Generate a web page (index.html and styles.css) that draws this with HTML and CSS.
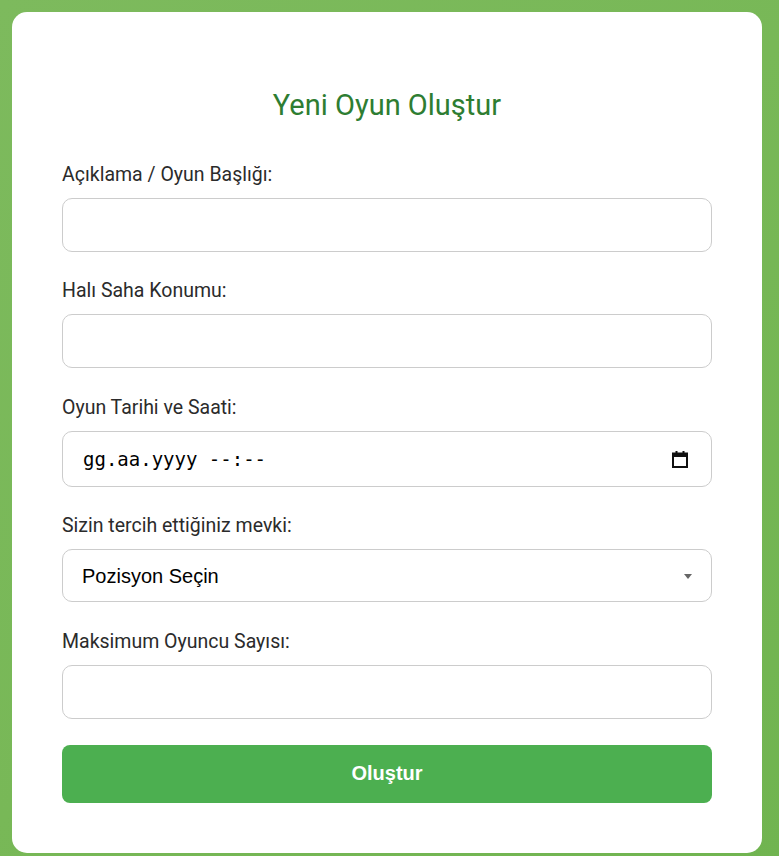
FILE: index.html
```html
<!DOCTYPE html>
<html lang="tr">
<head>
<meta charset="utf-8">
<title>Yeni Oyun Oluştur</title>
<link rel="stylesheet" href="styles.css">
</head>
<body>
<div class="card">
  <h2 class="title">Yeni Oyun Oluştur</h2>
  <form class="form">
    <div class="group">
      <label class="label" for="desc">Açıklama / Oyun Başlığı:</label>
      <input class="field" id="desc" type="text">
    </div>
    <div class="group">
      <label class="label" for="loc">Halı Saha Konumu:</label>
      <input class="field" id="loc" type="text">
    </div>
    <div class="group">
      <label class="label" for="dt">Oyun Tarihi ve Saati:</label>
      <div class="field date-field" id="dt">
        <span class="date-text">gg.aa.yyyy --:--</span>
        <svg class="cal" width="16" height="18" viewBox="0 0 16 18">
          <rect x="1" y="3.5" width="14" height="13.5" fill="none" stroke="#111" stroke-width="2"/>
          <rect x="1" y="3" width="14" height="4" fill="#111"/>
          <rect x="3.5" y="1" width="2" height="3" fill="#111"/>
          <rect x="10.5" y="1" width="2" height="3" fill="#111"/>
        </svg>
      </div>
    </div>
    <div class="group">
      <label class="label" for="pos">Sizin tercih ettiğiniz mevki:</label>
      <div class="select-wrap">
        <select class="field select" id="pos">
          <option>Pozisyon Seçin</option>
          <option>Kaleci</option>
          <option>Defans</option>
          <option>Orta Saha</option>
          <option>Forvet</option>
        </select>
      </div>
    </div>
    <div class="group last">
      <label class="label" for="max">Maksimum Oyuncu Sayısı:</label>
      <input class="field" id="max" type="number">
    </div>
    <button class="submit" type="button">Oluştur</button>
  </form>
</div>
</body>
</html>
```
FILE: styles.css
```css
html, body {
  margin: 0;
  padding: 0;
}
body {
  min-height: 856px;
  background: linear-gradient(135deg, #7dba5d 0%, #78b857 50%, #70b450 100%);
  font-family: Roboto, "Liberation Sans", sans-serif;
  padding: 12px;
  box-sizing: border-box;
}
.card {
  width: 750px;
  box-sizing: border-box;
  background: #fff;
  border-radius: 15px;
  padding: 50px;
  min-height: 840px;
}
.title {
  margin: 25.5px 0 42px;
  text-align: center;
  color: #2e7d32;
  font-family: Roboto, sans-serif;
  font-weight: 400;
  font-size: 29px;
  line-height: 34px;
}
.form {
  display: flex;
  flex-direction: column;
}
.group {
  display: flex;
  flex-direction: column;
  margin-bottom: 28.5px;
}
.group.last {
  margin-bottom: 26px;
}
.label {
  font-family: Roboto, sans-serif;
  font-size: 19.5px;
  line-height: 22px;
  color: #2b2b2b;
  margin-bottom: 12px;
}
.field {
  box-sizing: border-box;
  width: 100%;
  height: 54px;
  border: 1px solid #ccc;
  border-radius: 10px;
  padding: 0 15px;
  font-family: "Liberation Sans", Arial, sans-serif;
  font-size: 18px;
  color: #000;
  background: #fff;
  margin: 0;
}
.date-field {
  height: 56px;
  display: flex;
  align-items: center;
  justify-content: space-between;
  padding: 0 23px 0 20px;
}
.date-text {
  font-family: "DejaVu Sans Mono", "Liberation Mono", monospace;
  font-size: 19px;
  color: #000;
  white-space: pre;
}
.cal {
  display: block;
}
.select-wrap {
  position: relative;
}
.select-wrap::after {
  content: "";
  position: absolute;
  right: 20px;
  top: 25px;
  width: 0;
  height: 0;
  border-left: 4.5px solid transparent;
  border-right: 4.5px solid transparent;
  border-top: 5px solid #666;
  pointer-events: none;
}
.select {
  display: block;
  height: 53px;
  padding: 0 19px;
  font-size: 20px;
  -webkit-appearance: none;
  appearance: none;
}
.submit {
  height: 58px;
  border: none;
  border-radius: 8px;
  background: #4caf50;
  color: #fff;
  font-family: "Liberation Sans", Arial, sans-serif;
  font-weight: 700;
  font-size: 20px;
  cursor: pointer;
}
```
